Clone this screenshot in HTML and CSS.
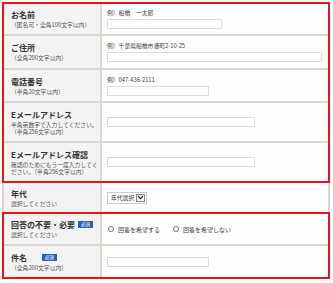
FILE: index.html
```html
<!DOCTYPE html>
<html lang="ja">
  <head>
    <meta charset="UTF-8" />
    <meta name="viewport" content="width=device-width, initial-scale=1.0" />
    <title>お問い合わせフォーム</title>
    <link rel="stylesheet" href="styles.css">
  </head>
  <body>
    <div class="form">
      <div class="group">
        <div class="row row-name">
          <div class="head">
            <p class="label">お名前</p>
            <p class="note">（匿名可・全角100文字以内）</p>
          </div>
          <div class="body">
            <p class="example">例）船橋　一太郎</p>
            <input type="text" class="field w-name" />
          </div>
        </div>
        <div class="row row-addr">
          <div class="head">
            <p class="label">ご住所</p>
            <p class="note">（全角200文字以内）</p>
          </div>
          <div class="body">
            <p class="example">例）千葉県船橋市湊町2-10-25</p>
            <input type="text" class="field w-addr" />
          </div>
        </div>
        <div class="row row-tel">
          <div class="head">
            <p class="label">電話番号</p>
            <p class="note">（半角20文字以内）</p>
          </div>
          <div class="body">
            <p class="example">例）047-436-2111</p>
            <input type="text" class="field w-short" />
          </div>
        </div>
        <div class="row row-mail">
          <div class="head">
            <p class="label">Eメールアドレス</p>
            <p class="note">半角英数字で入力してください。<br />（半角256文字以内）</p>
          </div>
          <div class="body">
            <input type="text" class="field w-mail" />
          </div>
        </div>
        <div class="row row-mail last">
          <div class="head">
            <p class="label">Eメールアドレス確認</p>
            <p class="note">確認のためにもう一度入力してください。（半角256文字以内）</p>
          </div>
          <div class="body">
            <input type="text" class="field w-mail" />
          </div>
        </div>
      </div>

      <div class="row row-age plain">
        <div class="head">
          <p class="label">年代</p>
          <p class="note">選択してください</p>
        </div>
        <div class="body">
          <div class="select">
            <span class="select-text">年代選択</span>
            <span class="select-arrow">
              <svg width="7" height="5" viewBox="0 0 7 5">
                <path d="M1 1 L3.5 3.6 L6 1" fill="none" stroke="#333" stroke-width="1.2" />
              </svg>
            </span>
          </div>
        </div>
      </div>

      <div class="group">
        <div class="row row-reply">
          <div class="head">
            <p class="label">回答の不要・必要<span class="badge">必須</span></p>
            <p class="note">選択してください</p>
          </div>
          <div class="body radios">
            <label class="radio"><span class="dot"></span>回答を希望する</label>
            <label class="radio"><span class="dot"></span>回答を希望しない</label>
          </div>
        </div>
        <div class="row row-subject last">
          <div class="head">
            <p class="label">件名<span class="badge wide">必須</span></p>
            <p class="note">（全角200文字以内）</p>
          </div>
          <div class="body">
            <input type="text" class="field w-short" />
          </div>
        </div>
      </div>
    </div>
  </body>
</html>
```

FILE: styles.css
```css
/* General Reset */
* {
  margin: 0;
  padding: 0;
  box-sizing: border-box;
}

body {
  font-family: "Noto Sans CJK JP", "Noto Sans", sans-serif;
  background-color: #fff;
  color: #333;
}

.form {
  width: 328px;
  margin: 2px 0 0 2px;
}

.group {
  border: 2px solid #e8131b;
}

.row {
  display: grid;
  grid-template-columns: 98px 1fr;
  border-bottom: 2px solid #dbd6d1;
}

.row.last {
  border-bottom: none;
}

.row.plain {
  border-left: 2px solid #dbd6d1;
  border-right: 2px solid #dbd6d1;
  border-bottom: none;
}

.row-name { height: 32px; }
.row-addr { height: 34px; }
.row-tel { height: 33px; }
.row-mail { height: 40px; }
.row-mail.last { height: 38px; }
.row-age { height: 29px; }
.row-reply { height: 32px; }
.row-subject { height: 31px; }

.head {
  background-color: #f3f3f3;
  border-right: 2px solid #dbd6d1;
  padding: 0 0 0 7px;
  display: flex;
  flex-direction: column;
  justify-content: center;
}

.label {
  font-size: 8px;
  font-weight: bold;
  line-height: 11px;
  color: #333;
  display: flex;
  align-items: center;
}

.note {
  font-size: 5.8px;
  line-height: 7.5px;
  color: #555;
  margin-top: 1px;
}

.badge {
  display: inline-block;
  background-color: #2d62b3;
  color: #fff;
  font-size: 4.5px;
  line-height: 7px;
  height: 7px;
  width: 15px;
  text-align: center;
  font-weight: normal;
  margin-left: 3px;
}

.badge.wide {
  margin-left: 15px;
}

.body {
  background-color: #fefefe;
  padding-left: 5px;
  display: flex;
  flex-direction: column;
  justify-content: center;
  align-items: flex-start;
}

.example {
  font-size: 5.8px;
  line-height: 7px;
  color: #444;
  margin-bottom: 3px;
}

.field {
  height: 10px;
  border: 1px solid #ddd;
  background: #fff;
  outline: none;
}

.w-name { width: 115px; }
.w-addr { width: 215px; }
.w-short { width: 102px; }
.w-mail { width: 148px; }

.select {
  display: flex;
  align-items: center;
  height: 12px;
  border: 1px solid #ccc;
  background: #fff;
  padding: 0 1px 0 3px;
  gap: 2px;
}

.select-text {
  font-size: 5.8px;
  color: #333;
}

.select-arrow {
  display: flex;
  align-items: center;
  justify-content: center;
  width: 9px;
  height: 8px;
  border: 1px solid #888;
  background: #f0f0f0;
}

.radios {
  flex-direction: row;
  align-items: center;
  justify-content: flex-start;
  gap: 13px;
  padding-left: 6px;
}

.radio {
  display: flex;
  align-items: center;
  gap: 4px;
  font-size: 6px;
  color: #444;
}

.dot {
  width: 6px;
  height: 6px;
  border: 1px solid #777;
  border-radius: 50%;
  background: #fff;
}
```
